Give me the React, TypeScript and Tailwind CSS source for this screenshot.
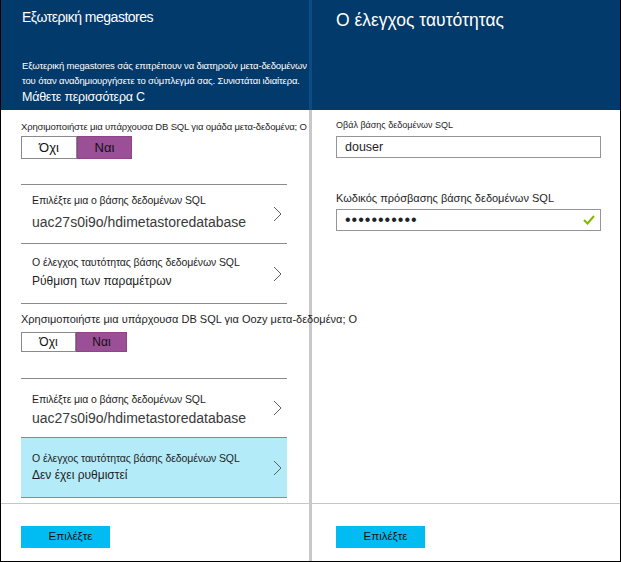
const font = "font-['Segoe_UI','Liberation_Sans',Arial,sans-serif]"

function Toggle({ small }: { small?: boolean }) {
  const h = small ? 'h-[20px] text-[12px]' : 'h-[23px] text-[13px]'
  return (
    <div className={`flex ${h} text-[#111]`}>
      <div className={`flex ${small ? 'w-[55px]' : 'w-[56px]'} items-center justify-center border border-[#8a8a8a] bg-white`}>Όχι</div>
      <div className={`flex ${small ? 'w-[51px]' : 'w-[55px]'} items-center justify-center border border-[#8d4489] bg-[#9b4f96]`}>Ναι</div>
    </div>
  )
}

function Chevron() {
  return (
    <svg width="9" height="16" viewBox="0 0 9 16" className="text-[#5f5f5f]">
      <polyline points="1,1 8,8 1,15" fill="none" stroke="currentColor" strokeWidth="1" />
    </svg>
  )
}

interface RowProps {
  label: string
  value: string
  big?: boolean
  pad: string
  gap: string
  active?: boolean
}

function PickerRow({ label, value, big, pad, gap, active }: RowProps) {
  return (
    <div className={`flex h-[59px] items-center justify-between pl-[11px] pr-[5px] ${active ? 'bg-[#b4ebf9]' : ''}`}>
      <div className={`flex h-full flex-col ${pad}`}>
        <p className="text-[10.5px] leading-[16px] tracking-[-0.1px] text-[#1e1e1e]">{label}</p>
        <p className={`${gap} ${big ? 'text-[14px] leading-[20px] text-[#3a3a3a]' : 'text-[12px] leading-[18px] text-[#1e1e1e]'}`}>{value}</p>
      </div>
      <Chevron />
    </div>
  )
}

function SelectButton() {
  return (
    <button type="button" className="flex h-[22px] w-[89px] items-center justify-center bg-[#00bcf2] pl-[10px] text-[11.5px] text-[#111]">
      Επιλέξτε
    </button>
  )
}

export default function App() {
  return (
    <div className={`${font} flex h-[562px] w-[621px] border-x border-b border-black bg-white`}>
      {/* left blade */}
      <section className="flex w-[308px] flex-col">
        <header className="flex h-[110px] flex-col bg-[#023a6b] pl-[21px] pb-[4px] pt-[7px] text-white">
          <h1 className="text-[14px] leading-[20px] tracking-[-0.5px]">Εξωτερική megastores</h1>
          <div className="mt-auto">
            <p className="whitespace-nowrap text-[9.5px] leading-[15px] tracking-[-0.15px]">
              Εξωτερική megastores σάς επιτρέπουν να διατηρούν μετα-δεδομένων
              <br />
              του όταν αναδημιουργήσετε το σύμπλεγμά σας. Συνιστάται ιδιαίτερα.
            </p>
            <p className="text-[12.5px] leading-[18px] tracking-[-0.25px]">Μάθετε περισσότερα C</p>
          </div>
        </header>

        <div className="flex-1 pl-[20px] pr-[22px] pt-[10px]">
          <p className="whitespace-nowrap text-[9.5px] leading-[14px] tracking-[-0.15px] text-[#1e1e1e]">
            Χρησιμοποιήστε μια υπάρχουσα DB SQL για ομάδα μετα-δεδομένα; Ο
          </p>
          <div className="mt-[2px]">
            <Toggle />
          </div>

          <div className="mt-[25px] divide-y divide-[#8a8a8a] border-y border-[#8a8a8a]">
            <PickerRow label="Επιλέξτε μια ο βάσης δεδομένων SQL" value="uac27s0i9o/hdimetastoredatabase" big pad="pt-[7px]" gap="mt-[4px]" />
            <PickerRow label="Ο έλεγχος ταυτότητας βάσης δεδομένων SQL" value="Ρύθμιση των παραμέτρων" pad="pt-[10px]" gap="mt-[2px]" />
          </div>

          <p className="relative z-10 mt-[7px] whitespace-nowrap text-[11px] leading-[16px] text-[#1e1e1e]">
            Χρησιμοποιήστε μια υπάρχουσα DB SQL για Oozy μετα-δεδομένα; Ο
          </p>
          <div className="mt-[5px]">
            <Toggle small />
          </div>

          <div className="mt-[26px] divide-y divide-[#8a8a8a] border-y border-[#8a8a8a]">
            <PickerRow label="Επιλέξτε μια ο βάσης δεδομένων SQL" value="uac27s0i9o/hdimetastoredatabase" big pad="pt-[12px]" gap="mt-[1px]" />
            <PickerRow label="Ο έλεγχος ταυτότητας βάσης δεδομένων SQL" value="Δεν έχει ρυθμιστεί" pad="pt-[12px]" gap="mt-0" active />
          </div>
        </div>

        <footer className="h-[58px] border-t border-[#c6c6c6] pl-[20px] pt-[22px]">
          <SelectButton />
        </footer>
      </section>

      {/* splitter */}
      <div className="flex w-[3px] flex-col">
        <div className="h-[110px] bg-[#0b4c86]" />
        <div className="flex-1 bg-[#c8c8c8]" />
      </div>

      {/* right blade */}
      <section className="flex w-[308px] flex-col">
        <header className="h-[110px] bg-[#023a6b] pl-[24px] pt-[8px] text-white">
          <h1 className="text-[17.5px] leading-[24px]">Ο έλεγχος ταυτότητας</h1>
        </header>

        <div className="flex-1 pl-[24px] pt-[9px]">
          <label className="block text-[9px] leading-[12px] text-[#1e1e1e]">Οβάλ βάσης δεδομένων SQL</label>
          <div className="mt-[5px] flex h-[22px] w-[265px] items-center border border-[#959595] px-[8px] text-[12.5px] text-[#1e1e1e]">
            douser
          </div>

          <label className="mt-[32px] block text-[11px] leading-[16px] text-[#1e1e1e]">
            Κωδικός πρόσβασης βάσης δεδομένων SQL
          </label>
          <div className="mt-[3px] flex h-[22px] w-[265px] items-center justify-between border border-[#959595] pl-[8px] pr-[5px]">
            <span className="text-[16px] leading-none tracking-[1px] text-[#222]">•••••••••••</span>
            <svg width="12" height="10" viewBox="0 0 12 10" className="text-[#7fba00]">
              <polyline points="1,5 4.5,8.5 11,1" fill="none" stroke="currentColor" strokeWidth="2" />
            </svg>
          </div>
        </div>

        <footer className="h-[58px] border-t border-[#c6c6c6] pl-[24px] pt-[22px]">
          <SelectButton />
        </footer>
      </section>
    </div>
  )
}
